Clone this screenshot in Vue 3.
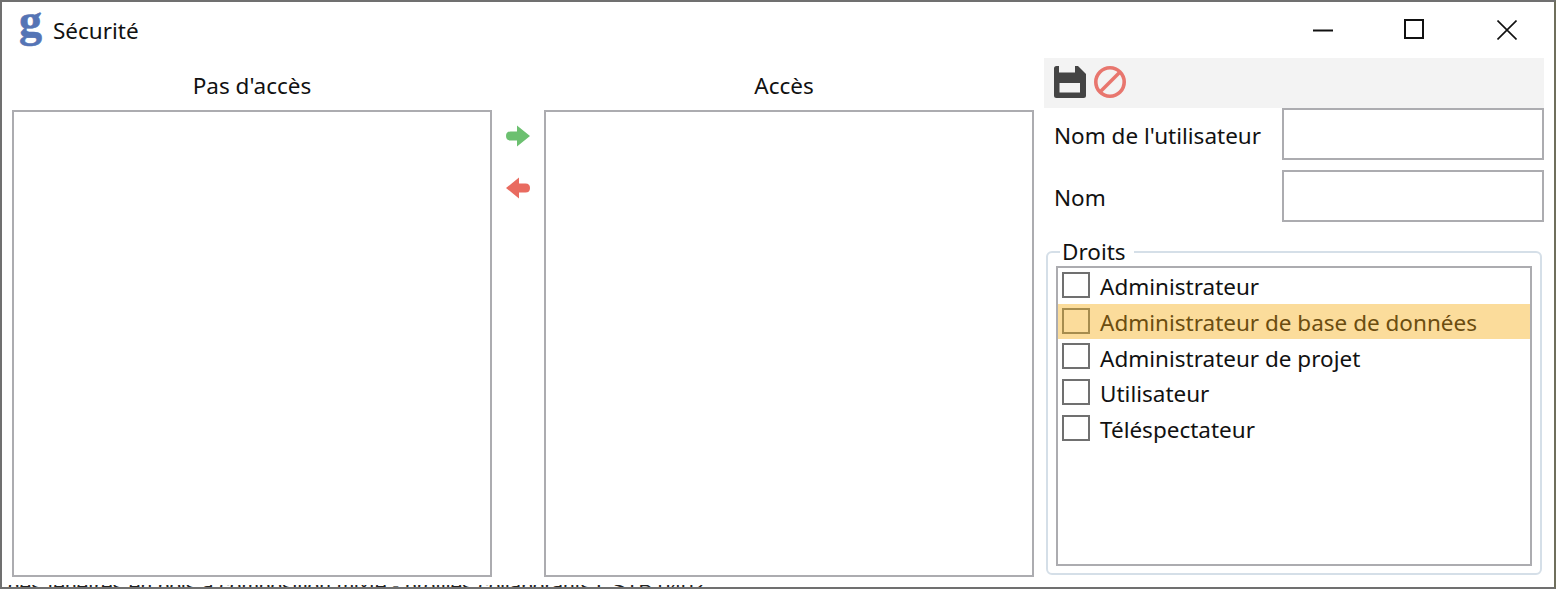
<template>
    <div class="window">
        <header class="titlebar">
            <span class="logo">g</span>
            <span class="title">Sécurité</span>
            <div class="caption-buttons">
                <button class="caption-btn" aria-label="Réduire">
                    <svg width="20" height="20" viewBox="0 0 20 20"><path d="M0 10.5H20" stroke="#111" stroke-width="2" fill="none" /></svg>
                </button>
                <button class="caption-btn" aria-label="Agrandir">
                    <svg width="20" height="20" viewBox="0 0 20 20"><rect x="1" y="1" width="18" height="18" stroke="#111" stroke-width="2" fill="none" /></svg>
                </button>
                <button class="caption-btn" aria-label="Fermer">
                    <svg width="20" height="20" viewBox="0 0 20 20"><path d="M0.5 0.5L19.5 19.5M19.5 0.5L0.5 19.5" stroke="#111" stroke-width="1.6" fill="none" /></svg>
                </button>
            </div>
        </header>

        <main class="content">
            <section class="column column-left">
                <h2 class="column-title">Pas d'accès</h2>
                <div class="listbox"></div>
            </section>

            <div class="transfer">
                <button class="transfer-btn" aria-label="Ajouter">
                    <svg width="24" height="22" viewBox="0 0 24 22">
                        <path d="M4.5 6.5H11V0.5L24 11L11 21.5V15.5H4.5Q0 15.5 0 11Q0 6.5 4.5 6.5Z" fill="#6cc070" />
                    </svg>
                </button>
                <button class="transfer-btn" aria-label="Retirer">
                    <svg width="24" height="22" viewBox="0 0 24 22">
                        <path d="M19.5 6.5H13V0.5L0 11L13 21.5V15.5H19.5Q24 15.5 24 11Q24 6.5 19.5 6.5Z" fill="#e96b60" />
                    </svg>
                </button>
            </div>

            <section class="column column-right">
                <h2 class="column-title">Accès</h2>
                <div class="listbox"></div>
            </section>

            <aside class="panel">
                <div class="toolbar">
                    <svg width="32" height="32" viewBox="0 0 32 32">
                        <path fill="#444" fill-rule="evenodd" d="M2.5 0H5V6.5H21V0H24L32 8V29.5A2.5 2.5 0 0 1 29.5 32H2.5A2.5 2.5 0 0 1 0 29.5V2.5A2.5 2.5 0 0 1 2.5 0ZM5.5 17V26.5H26V17Z" />
                    </svg>
                    <svg width="32" height="32" viewBox="0 0 32 32">
                        <circle cx="16" cy="16" r="14.2" stroke="#e8766e" stroke-width="3.6" fill="none" />
                        <path d="M25.5 6.5L6.5 25.5" stroke="#e8766e" stroke-width="3.6" fill="none" />
                    </svg>
                </div>

                <div class="form-row">
                    <label class="form-label">Nom de l'utilisateur</label>
                    <input class="form-input" type="text" />
                </div>
                <div class="form-row">
                    <label class="form-label">Nom</label>
                    <input class="form-input" type="text" />
                </div>

                <fieldset class="rights">
                    <legend class="rights-legend">Droits</legend>
                    <ul class="rights-list">
                        <li
                            v-for="item in rights"
                            :key="item"
                            class="rights-item"
                            :class="{ 'is-hover': item === hovered }"
                        >
                            <span class="checkbox"></span>
                            <span class="rights-label">{{ item }}</span>
                        </li>
                    </ul>
                </fieldset>
            </aside>
        </main>

        <div class="behind">
            <span class="behind-text">des fenêtres en bois à composition mixte - profilés collaborants CSTB 0402</span>
        </div>
    </div>
</template>

<script setup>
const rights = [
    'Administrateur',
    'Administrateur de base de données',
    'Administrateur de projet',
    'Utilisateur',
    'Téléspectateur',
];
const hovered = 'Administrateur de base de données';
</script>

<style>
html,
body {
    margin: 0;
    background: #fff;
    overflow: hidden;
}
</style>

<style scoped>
.window {
    box-sizing: border-box;
    width: 1556px;
    height: 589px;
    display: flex;
    flex-direction: column;
    background: #fff;
    border: 2px solid #707070;
    border-right-color: #6f6f5c;
    font-family: "Noto Sans", "Open Sans", sans-serif;
    font-size: 22.5px;
    color: #111;
}

.titlebar {
    flex: 0 0 56px;
    display: flex;
    align-items: center;
    padding-left: 17px;
}

.logo {
    width: 34px;
    font-family: "Liberation Serif", serif;
    font-weight: 700;
    font-size: 46px;
    line-height: 46px;
    color: #5574b5;
    -webkit-text-stroke: 0.6px #5574b5;
    margin-top: -18px;
}

.caption-buttons {
    display: flex;
    margin-left: auto;
    margin-right: 1px;
    align-items: center;
}

.caption-btn {
    width: 92px;
    height: 40px;
    padding: 0;
    border: 0;
    background: none;
    display: flex;
    align-items: center;
    justify-content: center;
}

.caption-btn:nth-child(2) svg {
    margin: 0 2px 2px 0;
}

.content {
    flex: 0 0 527px;
    display: flex;
    padding-left: 10px;
}

.column {
    display: flex;
    flex-direction: column;
}

.column-left {
    width: 480px;
}

.column-right {
    width: 490px;
}

.column-title {
    margin: 0;
    height: 52px;
    line-height: 56px;
    font-size: inherit;
    font-weight: 400;
    text-align: center;
}

.column-right .column-title {
    padding-right: 10px;
}

.listbox {
    box-sizing: border-box;
    height: 467px;
    border: 2px solid #acacb0;
}

.transfer {
    width: 52px;
    padding-top: 52px;
}

.transfer-btn {
    width: 100%;
    height: 52px;
    padding: 0;
    border: 0;
    background: none;
    display: flex;
    align-items: center;
    justify-content: center;
}

.panel {
    width: 500px;
    margin-left: 10px;
}

.toolbar {
    height: 50px;
    background: #f3f3f3;
    display: flex;
    align-items: center;
    gap: 8px;
    padding-left: 10px;
    padding-bottom: 2px;
    box-sizing: border-box;
}

.form-row {
    display: flex;
    justify-content: space-between;
    height: 52px;
    padding-left: 10px;
    margin-bottom: 10px;
}

.form-label {
    line-height: 56px;
}

.form-input {
    box-sizing: border-box;
    width: 262px;
    height: 52px;
    border: 2px solid #acacb0;
    border-radius: 0;
    outline: 0;
    background: #fff;
}

.rights {
    box-sizing: border-box;
    height: 337px;
    margin: 16px 2px 0;
    padding: 0 8px;
    border: 2px solid #d5dfe8;
    border-radius: 6px;
    min-width: 0;
}

.rights-legend {
    height: 28px;
    line-height: 28px;
    padding: 0 8px 0 2px;
    margin-left: 4px;
}

.rights-list {
    box-sizing: border-box;
    height: 300px;
    margin: 0;
    padding: 0;
    list-style: none;
    border: 2px solid #acacb0;
}

.rights-item {
    height: 35.7px;
    display: flex;
    align-items: center;
    gap: 10px;
    padding-left: 4px;
}

.rights-item.is-hover {
    background: #fbdc9b;
    color: #6b4d10;
}

.rights-label {
    padding-top: 2px;
}

.checkbox {
    box-sizing: border-box;
    width: 28px;
    height: 26px;
    border: 2px solid #707070;
    flex: none;
    margin-top: -2px;
}

.is-hover .checkbox {
    border-color: #a68c4e;
}

.behind {
    flex: 0 0 2px;
    overflow: hidden;
    padding-left: 6px;
    background: #fff;
    font-family: "Liberation Sans", sans-serif;
    font-size: 20.9px;
    line-height: 22px;
    color: #222;
    white-space: nowrap;
}

.behind-text {
    display: block;
    margin-top: -10px;
}
</style>
